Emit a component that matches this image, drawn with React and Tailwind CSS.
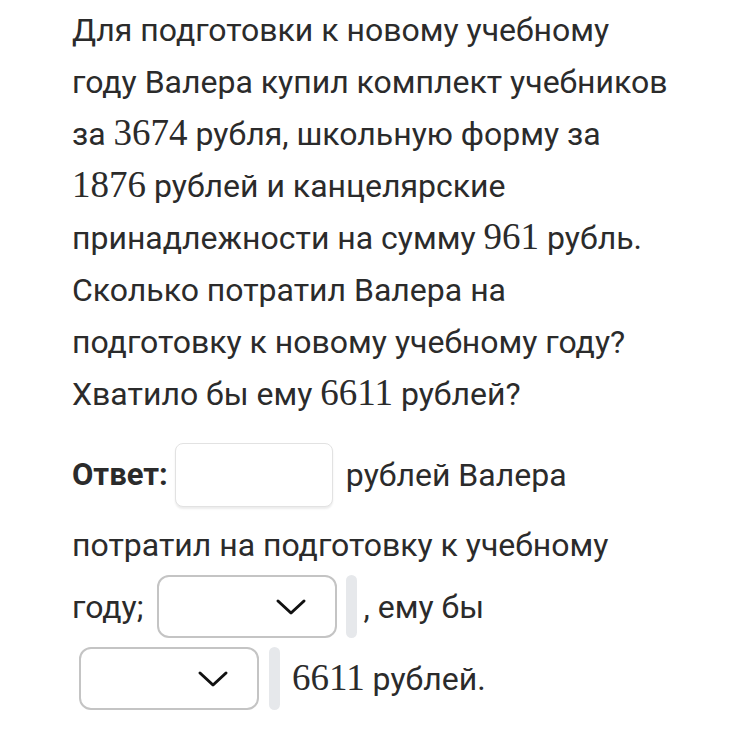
export default function App() {
  const n = (v) => (
    <span className="text-[37px] leading-none" style={{ fontFamily: '"Liberation Serif", "DejaVu Serif", serif' }}>
      {v}
    </span>
  );

  const Chevron = () => (
    <svg width="32" height="18" viewBox="0 0 32 18" fill="none">
      <path d="M3 3l13 12 13-12" stroke="#111" strokeWidth="3" strokeLinecap="round" strokeLinejoin="round" />
    </svg>
  );

  const Select = () => (
    <div className="w-[180px] h-[63px] rounded-[12px] border-2 border-[#c4c4c4] bg-white flex items-center justify-end pr-[28px]">
      <Chevron />
    </div>
  );

  const Bar = () => <div className="w-[11px] h-[63px] rounded-full bg-[#e6e8eb]" />;

  return (
    <div
      className="w-[750px] h-[750px] bg-white text-[#2b2b2b] pl-[72px] text-[32px] leading-[52px] whitespace-nowrap"
      style={{ fontFamily: 'Roboto, "Noto Sans", sans-serif' }}
    >
      <p className="pt-[4px]">
        Для подготовки к новому учебному
        <br />
        году Валера купил комплект учебников
        <br />
        за {n("3674")} рубля, школьную форму за
        <br />
        {n("1876")} рублей и канцелярские
        <br />
        принадлежности на сумму {n("961")} рубль.
        <br />
        Сколько потратил Валера на
        <br />
        подготовку к новому учебному году?
        <br />
        Хватило бы ему {n("6611")} рублей?
      </p>

      <div className="mt-[23px] flex items-center h-[64px]">
        <span className="font-bold text-[31px]">Ответ:</span>
        <div className="ml-[7px] w-[158px] h-[64px] rounded-[8px] border border-[#e2e2e2] bg-white shadow-[0_2px_2px_rgba(0,0,0,0.08)]" />
        <span className="ml-[13px]">рублей Валера</span>
      </div>

      <div className="mt-[12px]">потратил на подготовку к учебному</div>

      <div className="mt-[4px] flex items-center h-[63px]">
        <span>году;</span>
        <div className="ml-[14px]">
          <Select />
        </div>
        <div className="ml-[9px]">
          <Bar />
        </div>
        <span className="ml-[6px]">, ему бы</span>
      </div>

      <div className="mt-[9px] flex items-center h-[63px] pl-[7px]">
        <Select />
        <div className="ml-[10px]">
          <Bar />
        </div>
        <span className="ml-[12px]">
          {n("6611")} рублей.
        </span>
      </div>
    </div>
  );
}
